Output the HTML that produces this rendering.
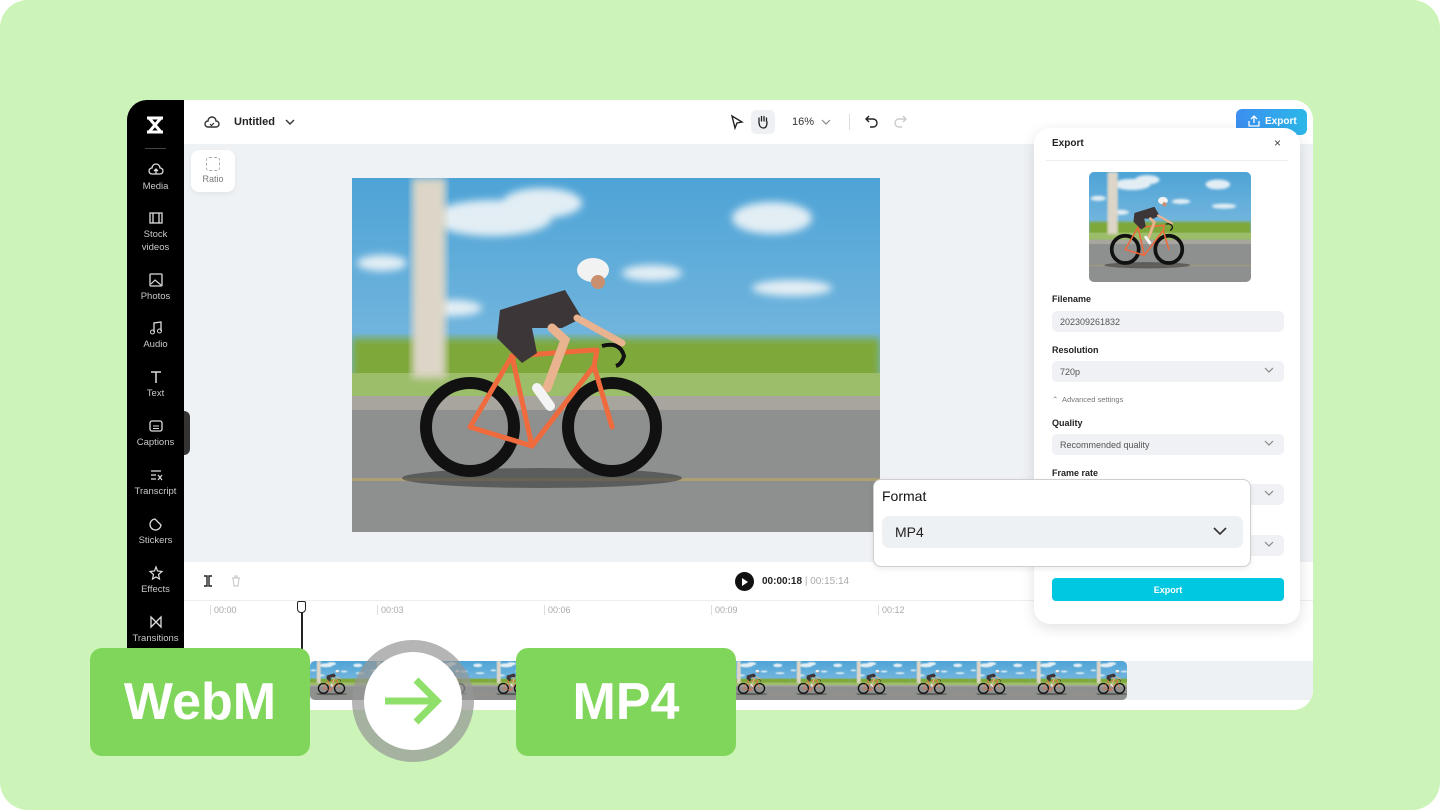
<!DOCTYPE html>
<html><head><meta charset="utf-8"><style>
*{box-sizing:border-box;margin:0;padding:0}
body{width:1440px;height:810px;overflow:hidden;background:#fff;font-family:"Liberation Sans",sans-serif;position:relative}
.bg{position:absolute;inset:0;background:#ccf4b8;border-radius:28px}
.win{position:absolute;left:127px;top:100px;width:1186px;height:610px;background:#fff;border-radius:20px;overflow:hidden}
.side{position:absolute;left:0;top:0;width:57px;height:610px;background:#000}
.si{position:absolute;left:0;width:57px;text-align:center;color:#c9c9c9;font-size:9.5px;line-height:13px}
.si svg{display:block;margin:0 auto 2px}
.top{position:absolute;left:57px;top:0;right:0;height:44px;background:#fff}
.canvas{position:absolute;left:57px;top:44px;right:0;height:418px;background:#eff2f5}
.tl{position:absolute;left:57px;top:462px;right:0;height:148px;background:#fff}
.abs{position:absolute}
.lbl{font-size:9px;font-weight:bold;color:#222}
.fld{position:absolute;left:18px;width:232px;height:21px;background:#eff1f4;border-radius:5px;font-size:9px;color:#555;padding:6px 8px}
.chev{position:absolute;right:10px;top:5px}
</style></head><body>
<div class="bg"></div>
<svg width="0" height="0" style="position:absolute">
<defs>
<linearGradient id="sky" x1="0" y1="0" x2="0" y2="1"><stop offset="0" stop-color="#4ea3d6"/><stop offset="1" stop-color="#9ccbe6"/></linearGradient>
<filter id="bl"><feGaussianBlur stdDeviation="4"/></filter>
<symbol id="scene" viewBox="0 0 528 354" preserveAspectRatio="none">
<rect width="528" height="354" fill="url(#sky)"/>
<g fill="#f2f6f8" filter="url(#bl)" opacity=".9">
<ellipse cx="140" cy="40" rx="60" ry="18"/><ellipse cx="190" cy="25" rx="40" ry="15"/><ellipse cx="420" cy="40" rx="40" ry="16"/><ellipse cx="300" cy="95" rx="30" ry="8"/><ellipse cx="440" cy="110" rx="40" ry="8"/><ellipse cx="30" cy="85" rx="25" ry="8"/><ellipse cx="100" cy="130" rx="30" ry="8"/>
</g>
<rect y="160" width="528" height="45" fill="#7fa83a" filter="url(#bl)"/>
<rect y="195" width="528" height="25" fill="#9cbd6a"/>
<rect x="60" y="0" width="34" height="200" fill="#ddd6c8" filter="url(#bl)"/>
<rect y="218" width="528" height="136" fill="#8d908f"/>
<rect y="218" width="528" height="14" fill="#a7a59e"/>
<rect y="300" width="528" height="3" fill="#b9a46a" opacity=".7"/>
<ellipse cx="190" cy="300" rx="140" ry="10" fill="#3a3c3c" opacity=".6"/>
<g fill="none" stroke="#111" stroke-width="12"><circle cx="118" cy="249" r="44"/><circle cx="260" cy="249" r="44"/></g>
<g fill="none" stroke="#ef6a3c" stroke-width="5" stroke-linecap="round"><path d="M118 249 L180 268 L242 188 L260 249 M180 268 L160 178 L242 172 M118 249 L160 178 M242 188 L245 172"/></g>
<path d="M250 168 q18 -5 22 10 q-2 8 -8 10" stroke="#111" stroke-width="4" fill="none"/>
<path d="M148 132 L213 112 L230 140 L210 150 L180 150 L185 175 L170 185 L145 160 Z" fill="#3c3638"/>
<path d="M200 150 L213 162 L195 210" stroke="#e9b38f" stroke-width="9" fill="none" stroke-linecap="round"/>
<path d="M225 140 L270 165" stroke="#e9b38f" stroke-width="7" stroke-linecap="round"/>
<path d="M185 210 L198 228" stroke="#f4f4f4" stroke-width="10" stroke-linecap="round"/>
<ellipse cx="241" cy="92" rx="16" ry="12" fill="#f2f2f2"/>
<circle cx="246" cy="104" r="7" fill="#c98f6e"/>
</symbol>
</defs></svg>

<div class="win">
 <div class="side">
  <svg class="abs" style="left:17px;top:15px" width="22" height="20" viewBox="0 0 22 20"><path d="M3 3h16M3 17h16M5 3l12 14M17 3L5 17" stroke="#fff" stroke-width="3" fill="none"/></svg>
  <div class="abs" style="left:18px;top:48px;width:21px;height:1px;background:#444"></div>
  <div class="si" style="top:62px"><svg width="16" height="16" viewBox="0 0 16 16"><path d="M4 12a3 3 0 010-6 4 4 0 018 0 3 3 0 010 6H4zM8 7v5M6 9l2-2 2 2" stroke="#ddd" stroke-width="1.3" fill="none"/></svg>Media</div>
  <div class="si" style="top:110px"><svg width="16" height="16" viewBox="0 0 16 16"><rect x="2" y="3" width="12" height="10" stroke="#ddd" stroke-width="1.3" fill="none"/><path d="M5 3v10M11 3v10" stroke="#ddd" stroke-width="1.3"/></svg>Stock<br>videos</div>
  <div class="si" style="top:172px"><svg width="16" height="16" viewBox="0 0 16 16"><rect x="2" y="2" width="12" height="12" rx="1" stroke="#ddd" stroke-width="1.3" fill="none"/><path d="M3 12l4-4 6 5" stroke="#ddd" stroke-width="1.2" fill="none"/></svg>Photos</div>
  <div class="si" style="top:220px"><svg width="16" height="16" viewBox="0 0 16 16"><path d="M6 12V3l7-1v9" stroke="#ddd" stroke-width="1.3" fill="none"/><circle cx="4.5" cy="12" r="2" stroke="#ddd" fill="none"/><circle cx="11.5" cy="11" r="2" stroke="#ddd" fill="none"/></svg>Audio</div>
  <div class="si" style="top:269px"><svg width="16" height="16" viewBox="0 0 16 16"><path d="M3 3h10M8 3v11" stroke="#ddd" stroke-width="1.5"/></svg>Text</div>
  <div class="si" style="top:318px"><svg width="16" height="16" viewBox="0 0 16 16"><rect x="2" y="3" width="12" height="10" rx="2" stroke="#ddd" stroke-width="1.3" fill="none"/><path d="M5 8h6M5 10.5h6" stroke="#ddd"/></svg>Captions</div>
  <div class="si" style="top:367px"><svg width="16" height="16" viewBox="0 0 16 16"><path d="M3 4h10M3 8h5M3 12h5M10 8l4 5M14 8l-4 5" stroke="#ddd" stroke-width="1.2" fill="none"/></svg>Transcript</div>
  <div class="si" style="top:416px"><svg width="16" height="16" viewBox="0 0 16 16"><path d="M13 9A5.5 5.5 0 117 3l6 6z" stroke="#ddd" stroke-width="1.3" fill="none"/></svg>Stickers</div>
  <div class="si" style="top:465px"><svg width="16" height="16" viewBox="0 0 16 16"><path d="M8 2l1.5 4 4.5.5-3.5 3 1 4.5L8 12l-3.5 2 1-4.5L2 6.5 6.5 6z" stroke="#ddd" stroke-width="1.2" fill="none"/></svg>Effects</div>
  <div class="si" style="top:514px"><svg width="16" height="16" viewBox="0 0 16 16"><path d="M3 3v10l10-10v10z" stroke="#ddd" stroke-width="1.3" fill="none"/></svg>Transitions</div>
 </div>
 <div class="top">
  <svg class="abs" style="left:20px;top:14px" width="16" height="16" viewBox="0 0 16 16"><path d="M4 13a3 3 0 010-6 4 4 0 018 0 3 3 0 010 6z" stroke="#333" stroke-width="1.4" fill="none"/><path d="M6 10l1.5 1.5L10 9" stroke="#333" stroke-width="1.2" fill="none"/></svg>
  <div class="abs" style="left:50px;top:16px;font-size:11px;font-weight:bold;color:#222">Untitled</div>
  <svg class="abs" style="left:101px;top:18px" width="10" height="8"><path d="M1 2l4 4 4-4" stroke="#333" stroke-width="1.4" fill="none"/></svg>
  <svg class="abs" style="left:546px;top:14px" width="14" height="16"><path d="M2 2l10 6-5 1-2 5z" stroke="#222" stroke-width="1.4" fill="none"/></svg>
  <div class="abs" style="left:567px;top:10px;width:24px;height:24px;background:#eef0f3;border-radius:5px"></div>
  <svg class="abs" style="left:572px;top:14px" width="14" height="15" viewBox="0 0 14 15"><path d="M3 8V4M5.5 7V2.5M8 7V2.5M10.5 7.5V4M3 8c0 4 2 6 4.5 6S11 12 11 8" stroke="#222" stroke-width="1.3" fill="none" stroke-linecap="round"/></svg>
  <div class="abs" style="left:608px;top:16px;font-size:11px;color:#333">16%</div>
  <svg class="abs" style="left:637px;top:18px" width="10" height="8"><path d="M1 2l4 4 4-4" stroke="#888" stroke-width="1.2" fill="none"/></svg>
  <div class="abs" style="left:665px;top:14px;width:1px;height:16px;background:#ddd"></div>
  <svg class="abs" style="left:681px;top:14px" width="14" height="14"><path d="M4 2L1 5l3 3M1 5h7a4 4 0 010 8H5" stroke="#222" stroke-width="1.4" fill="none"/></svg>
  <svg class="abs" style="left:709px;top:14px" width="14" height="14"><path d="M10 2l3 3-3 3M13 5H6a4 4 0 000 8h3" stroke="#ccc" stroke-width="1.4" fill="none"/></svg>
  <div class="abs" style="left:1052px;top:9px;width:71px;height:26px;border-radius:6px;background:linear-gradient(90deg,#3c8ef0,#2bb8e8);color:#fff;font-size:10px;font-weight:bold;padding:7px 0 0 29px">Export</div>
  <svg class="abs" style="left:1064px;top:15px" width="12" height="12"><path d="M6 8V1M3 4l3-3 3 3M1 6v5h10V6" stroke="#fff" stroke-width="1.3" fill="none"/></svg>
 </div>
 <div class="canvas">
  <div class="abs" style="left:7px;top:6px;width:44px;height:42px;background:#fff;border-radius:8px;box-shadow:0 2px 6px rgba(0,0,0,.06)">
   <div class="abs" style="left:15px;top:7px;width:14px;height:14px;border:1.5px dashed #aaa;border-radius:3px"></div>
   <div class="abs" style="left:0;top:24px;width:44px;text-align:center;font-size:9px;color:#777">Ratio</div>
  </div>
  <svg class="abs" style="left:168px;top:34px" width="528" height="354"><use href="#scene"/></svg>
  <div class="abs" style="left:0;top:267px;width:6px;height:44px;background:#333;border-radius:0 6px 6px 0"></div>
 </div>
 <div class="tl">
  <div class="abs" style="left:0;top:38px;right:0;height:1px;background:#eceef1"></div>
  <svg class="abs" style="left:18px;top:12px" width="12" height="14"><path d="M2 2h3v10H2M10 2H7v10h3" stroke="#222" stroke-width="1.4" fill="none"/></svg>
  <svg class="abs" style="left:46px;top:12px" width="12" height="14"><path d="M2 4h8M3 4l1 8h4l1-8M5 4V2h2v2" stroke="#ccc" stroke-width="1.2" fill="none"/></svg>
  <div class="abs" style="left:551px;top:10px;width:19px;height:19px;border-radius:50%;background:#111"></div>
  <svg class="abs" style="left:558px;top:16px" width="7" height="8"><path d="M0 0l6 4-6 4z" fill="#fff"/></svg>
  <div class="abs" style="left:578px;top:14px;font-size:10px;font-weight:bold;color:#222">00:00:18 <span style="font-weight:normal;color:#aaa">| 00:15:14</span></div>
  <div class="abs" style="left:0;top:39px;right:0;height:20px;font-size:9px;color:#aaa">
   <div class="abs" style="left:26px;top:4px;border-left:1px solid #ddd;padding-left:3px">00:00</div>
   <div class="abs" style="left:193px;top:4px;border-left:1px solid #ddd;padding-left:3px">00:03</div>
   <div class="abs" style="left:360px;top:4px;border-left:1px solid #ddd;padding-left:3px">00:06</div>
   <div class="abs" style="left:527px;top:4px;border-left:1px solid #ddd;padding-left:3px">00:09</div>
   <div class="abs" style="left:694px;top:4px;border-left:1px solid #ddd;padding-left:3px">00:12</div>
  </div>
  <div class="abs" style="left:0;top:99px;right:0;height:39px;background:#eef1f4"></div>
  <div class="abs" style="left:126px;top:99px;width:817px;height:39px;border-radius:5px;overflow:hidden;display:flex">
   <svg width="60" height="39" style="flex:none"><use href="#scene"/></svg><svg width="60" height="39" style="flex:none"><use href="#scene"/></svg><svg width="60" height="39" style="flex:none"><use href="#scene"/></svg><svg width="60" height="39" style="flex:none"><use href="#scene"/></svg><svg width="60" height="39" style="flex:none"><use href="#scene"/></svg><svg width="60" height="39" style="flex:none"><use href="#scene"/></svg><svg width="60" height="39" style="flex:none"><use href="#scene"/></svg><svg width="60" height="39" style="flex:none"><use href="#scene"/></svg><svg width="60" height="39" style="flex:none"><use href="#scene"/></svg><svg width="60" height="39" style="flex:none"><use href="#scene"/></svg><svg width="60" height="39" style="flex:none"><use href="#scene"/></svg><svg width="60" height="39" style="flex:none"><use href="#scene"/></svg><svg width="60" height="39" style="flex:none"><use href="#scene"/></svg><svg width="60" height="39" style="flex:none"><use href="#scene"/></svg>
  </div>
  <div class="abs" style="left:117px;top:40px;width:1.5px;height:60px;background:#222"></div>
  <div class="abs" style="left:113px;top:39px;width:9px;height:12px;border:1.5px solid #222;border-radius:2px 2px 4px 4px;background:#fff"></div>
 </div>
 <div class="abs" style="left:907px;top:28px;width:266px;height:496px;background:#fff;border-radius:16px;box-shadow:0 4px 14px rgba(0,0,0,.12)">
  <div class="abs lbl" style="left:18px;top:10px;font-size:10px">Export</div>
  <div class="abs" style="left:240px;top:8px;font-size:12px;color:#444">×</div>
  <div class="abs" style="left:12px;top:32px;width:242px;height:1px;background:#eee"></div>
  <svg class="abs" style="left:55px;top:44px;border-radius:5px" width="162" height="110"><use href="#scene"/></svg>
  <div class="abs lbl" style="left:18px;top:166px">Filename</div>
  <div class="fld" style="top:183px">202309261832</div>
  <div class="abs lbl" style="left:18px;top:217px">Resolution</div>
  <div class="fld" style="top:233px">720p<svg class="chev" width="10" height="8"><path d="M1 2l4 4 4-4" stroke="#888" stroke-width="1.2" fill="none"/></svg></div>
  <div class="abs" style="left:18px;top:267px;font-size:7.5px;color:#777">⌃&nbsp; Advanced settings</div>
  <div class="abs lbl" style="left:18px;top:290px">Quality</div>
  <div class="fld" style="top:306px">Recommended quality<svg class="chev" width="10" height="8"><path d="M1 2l4 4 4-4" stroke="#888" stroke-width="1.2" fill="none"/></svg></div>
  <div class="abs lbl" style="left:18px;top:340px">Frame rate</div>
  <div class="fld" style="top:356px"><svg class="chev" width="10" height="8"><path d="M1 2l4 4 4-4" stroke="#888" stroke-width="1.2" fill="none"/></svg></div>
  <div class="fld" style="top:407px"><svg class="chev" width="10" height="8"><path d="M1 2l4 4 4-4" stroke="#888" stroke-width="1.2" fill="none"/></svg></div>
  <div class="abs" style="left:18px;top:450px;width:232px;height:23px;background:#00c8e0;border-radius:4px;color:#fff;font-size:9px;font-weight:bold;text-align:center;padding-top:7px">Export</div>
 </div>
</div>
<div class="abs" style="left:873px;top:479px;width:378px;height:88px;background:#fff;border:1.5px solid #cfcfcf;border-radius:8px;box-shadow:0 2px 6px rgba(0,0,0,.08)">
 <div class="abs" style="left:8px;top:8px;font-size:14px;color:#111">Format</div>
 <div class="abs" style="left:8px;top:36px;width:361px;height:32px;background:#eef1f4;border-radius:7px;font-size:14px;color:#222;padding:8px 0 0 13px">MP4</div>
 <svg class="abs" style="left:339px;top:46px" width="14" height="10"><path d="M1 2l6 6 6-6" stroke="#333" stroke-width="1.6" fill="none"/></svg>
</div>
<div class="abs" style="left:90px;top:648px;width:220px;height:108px;background:#80d65a;border-radius:12px;color:#fff;font-size:52px;font-weight:bold;text-align:center;line-height:108px">WebM</div>
<div class="abs" style="left:516px;top:648px;width:220px;height:108px;background:#80d65a;border-radius:12px;color:#fff;font-size:52px;font-weight:bold;text-align:center;line-height:108px">MP4</div>
<div class="abs" style="left:352px;top:640px;width:122px;height:122px;border-radius:50%;background:rgba(150,150,150,.7)"></div>
<div class="abs" style="left:364px;top:652px;width:98px;height:98px;border-radius:50%;background:#fff"></div>
<svg class="abs" style="left:383px;top:676px" width="60" height="50"><path d="M2 25h52M33 4l21 21-21 21" stroke="#8ee06a" stroke-width="7" fill="none"/></svg>
</body></html>
